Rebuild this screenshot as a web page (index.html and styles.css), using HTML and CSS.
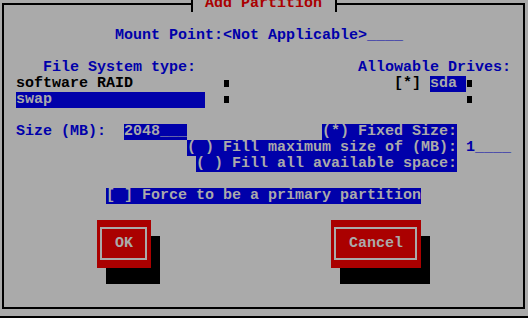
FILE: index.html
```html
<!DOCTYPE html>
<html>
<head>
<meta charset="utf-8">
<link rel="stylesheet" href="styles.css">
</head>
<body>
<div class="screen">
  <div class="frame"></div>
  <div class="title"><span class="title-text">Add Partition</span></div>

  <div class="txt blue mount">Mount Point:&lt;Not Applicable&gt;____</div>

  <div class="txt blue fstype">File System type:</div>
  <div class="txt blue drives">Allowable Drives:</div>

  <div class="txt black fs-raid">software RAID</div>
  <div class="mark m-fs1"></div>
  <div class="txt black drive-check">[*]</div>
  <div class="txt sel drive-sda">sda </div>
  <div class="mark m-dr1"></div>

  <div class="txt sel fs-swap">swap</div>
  <div class="mark m-fs2"></div>
  <div class="mark m-dr2"></div>

  <div class="txt blue size-label">Size (MB):</div>
  <div class="txt sel size-entry">2048___</div>
  <div class="txt sel opt-fixed">(*) Fixed Size:</div>
  <div class="txt sel opt-max">( ) Fill maximum size of (MB):</div>
  <div class="txt blue max-entry">1____</div>
  <div class="txt sel opt-all">( ) Fill all available space:</div>

  <div class="txt sel primary">[ ] Force to be a primary partition</div>

  <div class="btn btn-ok"><div class="btn-frame"><span class="btn-label">OK</span></div></div>
  <div class="btn btn-cancel"><div class="btn-frame"><span class="btn-label">Cancel</span></div></div>
</div>
</body>
</html>
```
FILE: styles.css
```css
html {
  background: #000000;
  overflow: hidden;
}

body {
  margin: 0;
  padding: 4px 0 0 0;
  background: transparent;
}

.screen {
  display: grid;
  grid-template-columns: repeat(61, 9px);
  grid-template-rows: repeat(20, 16px);
  margin: -8px 0 0 -2px;
  background: #aaaaaa;
  font-family: "Liberation Mono", "DejaVu Sans Mono", monospace;
  font-weight: bold;
  font-size: 15px;
  line-height: 16px;
  white-space: pre;
}

.frame {
  grid-column: 1 / 60;
  grid-row: 1 / 21;
  margin: 7px 4px 7px 4px;
  border: 2px solid #000;
}

.title {
  grid-column: 22 / 39;
  grid-row: 1;
  margin: 0 3px 0 4px;
  border-left: 2px solid #000;
  border-right: 2px solid #000;
  background: #aaaaaa;
  padding-left: 12px;
  color: #aa0000;
}

.blue { color: #0000aa; }
.black { color: #000; }
.sel { background: #0000aa; color: #aaaaaa; }

.mount { grid-column: 14 / span 32; grid-row: 3; }
.fstype { grid-column: 6 / span 17; grid-row: 5; }
.drives { grid-column: 41 / span 17; grid-row: 5; }

.fs-raid { grid-column: 3 / span 13; grid-row: 6; }
.drive-check { grid-column: 45 / span 3; grid-row: 6; }
.drive-sda { grid-column: 49 / span 4; grid-row: 6; }
.fs-swap { grid-column: 3 / span 21; grid-row: 7; }

.mark {
  width: 5px;
  height: 7px;
  margin: 4px 0 0 1px;
  background: #000;
  align-self: start;
  justify-self: start;
}
.m-fs1 { grid-column: 26; grid-row: 6; }
.m-fs2 { grid-column: 26; grid-row: 7; }
.m-dr1 { grid-column: 53; grid-row: 6; }
.m-dr2 { grid-column: 53; grid-row: 7; }

.size-label { grid-column: 3 / span 10; grid-row: 9; }
.size-entry { grid-column: 15 / span 7; grid-row: 9; }
.opt-fixed { grid-column: 37 / span 15; grid-row: 9; }
.opt-max { grid-column: 22 / span 30; grid-row: 10; }
.max-entry { grid-column: 53 / span 5; grid-row: 10; }
.opt-all { grid-column: 23 / span 29; grid-row: 11; }

.primary { grid-column: 13 / span 35; grid-row: 13; }

.btn {
  grid-row: 15 / span 3;
  background: #aa0000;
  box-shadow: 9px 16px 0 #000;
  padding: 7px 4px 8px 3px;
  display: flex;
}
.btn-ok { grid-column: 12 / span 6; }
.btn-cancel { grid-column: 38 / span 10; }

.btn-frame {
  flex: 1;
  border: 2px solid #aaaaaa;
  padding: 7px 0 6px 13px;
  color: #aaaaaa;
}
```
